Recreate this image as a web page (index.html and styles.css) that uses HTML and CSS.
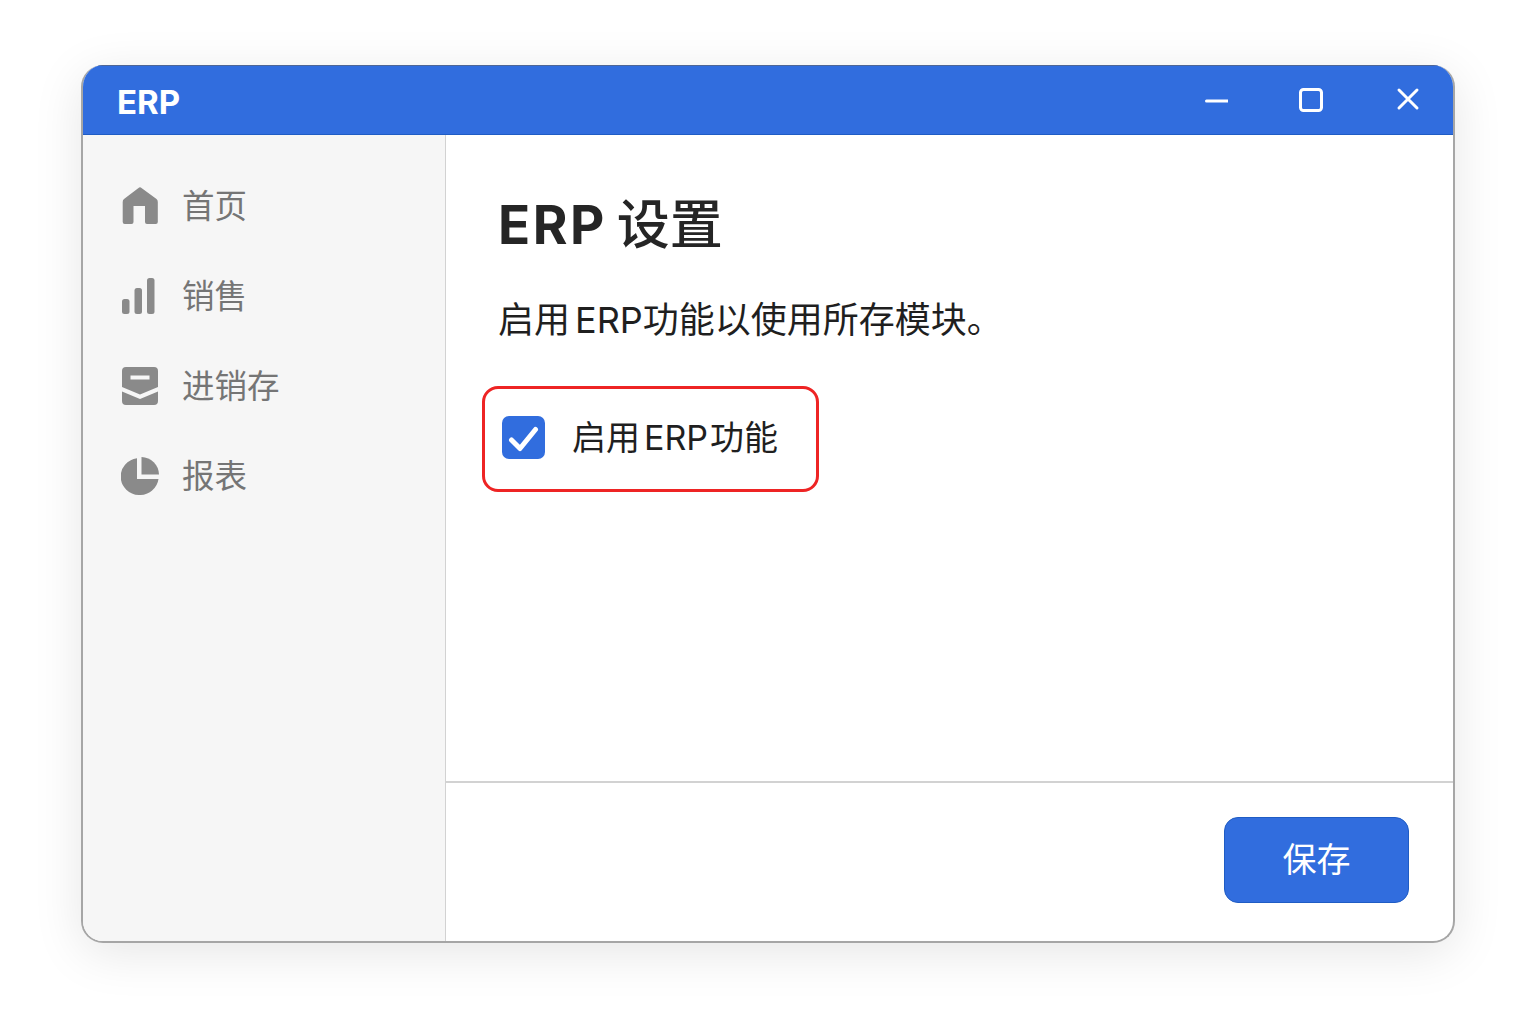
FILE: index.html
```html
<!DOCTYPE html>
<html lang="zh-CN">
<head>
    <meta charset="UTF-8">
    <title>ERP 设置</title>
    <link rel="stylesheet" href="styles.css">
</head>
<body>
    <div class="window">
        <header class="titlebar">
            <span class="app-name">ERP</span>
            <div class="window-controls">
                <svg class="win-icon" viewBox="0 0 28 28"><path d="M6.500 15h21" /></svg>
                <svg class="win-icon" viewBox="0 0 28 28"><rect x="3.500" y="3.500" width="21" height="21" rx="3" /></svg>
                <svg class="win-icon" viewBox="0 0 28 28"><path d="M5 4l18 18M23 4l-18 18" /></svg>
            </div>
        </header>
        <div class="window-body">
            <nav class="sidebar">
                <a class="nav-item">
                    <svg class="nav-icon" viewBox="0 0 38 38"><path d="M17.500 1Q19 -0.500 20.500 1L35.500 12Q36.800 13 36.800 15V35Q36.800 37 34.800 37H26Q24 37 24 35V19H12.500V35Q12.500 37 10.500 37H3.700Q1.700 37 1.700 35V15Q1.700 13 3 12Z" /></svg>
                    <span>首页</span>
                </a>
                <a class="nav-item">
                    <svg class="nav-icon" viewBox="0 0 38 38"><rect x="1" y="22" width="7.500" height="15" rx="2.500" /><rect x="13.500" y="11" width="7.500" height="26" rx="2.500" /><rect x="26" y="1" width="7.500" height="36" rx="2.500" /></svg>
                    <span>销售</span>
                </a>
                <a class="nav-item">
                    <svg class="nav-icon" viewBox="0 0 38 38"><path d="M5 0H33Q37 0 37 4V20L19 27.500L1 20V4Q1 0 5 0ZM9.500 8.500V12.500H28.500V8.500Z" fill-rule="evenodd" /><path d="M1 24.500L19 32L37 24.500V34Q37 38 33 38H5Q1 38 1 34Z" /></svg>
                    <span>进销存</span>
                </a>
                <a class="nav-item">
                    <svg class="nav-icon" viewBox="0 0 38 38"><path d="M16 1.200V22H37.500A19 18.500 0 1 1 16 1.200Z" /><path d="M20.500 0A18 18 0 0 1 38 17.500H20.500Z" /></svg>
                    <span>报表</span>
                </a>
            </nav>
            <main class="content">
                <section class="settings">
                    <h1><span class="latin-bold">ERP</span>设置</h1>
                    <p class="description">启用<span class="latin">ERP</span>功能以使用所存模块。</p>
                    <label class="checkbox-row">
                        <span class="checkbox">
                            <svg viewBox="0 0 43 43"><path d="M9.500 24L18 32.500L33.500 13.500" /></svg>
                        </span>
                        <span>启用<span class="latin">ERP</span>功能</span>
                    </label>
                </section>
                <footer class="actions">
                    <button class="btn-save">保存</button>
                </footer>
            </main>
        </div>
    </div>
</body>
</html>
```

FILE: styles.css
```css
* {
    margin: 0;
    padding: 0;
    box-sizing: border-box;
}

body {
    font-family: "Inter", "Noto Sans CJK SC", "Noto Sans", sans-serif;
    background: #fff;
    color: #1f1f1f;
    padding: 65px 81px 81px 81px;
    height: 1024px;
    overflow: hidden;
}

.window {
    width: 1374px;
    height: 878px;
    display: flex;
    flex-direction: column;
    background: #fff;
    border: 2px solid #a6a6a6;
    border-top: 0;
    border-radius: 22px;
    overflow: hidden;
    box-shadow: 0 10px 50px rgba(0, 0, 0, 0.1);
}

.titlebar {
    height: 70px;
    flex-shrink: 0;
    margin: 0 -2px;
    padding: 0 33px 0 36px;
    display: flex;
    align-items: center;
    justify-content: space-between;
    background: #316dde;
    border-top: 1px solid #4f6695;
    border-bottom: 1px solid #1f5cc4;
    color: #fff;
}

.app-name {
    padding-top: 4px;
    font-size: 33px;
    font-weight: 700;
    line-height: 1;
}

.window-controls {
    display: flex;
    align-items: center;
    gap: 69px;
}

.win-icon {
    width: 28px;
    height: 28px;
    fill: none;
    stroke: #fff;
    stroke-width: 3;
    stroke-linecap: round;
}

.window-body {
    flex: 1;
    display: flex;
    min-height: 0;
}

.sidebar {
    width: 363px;
    flex-shrink: 0;
    padding: 26px 0 0 38px;
    background: #f6f6f6;
    border-right: 1px solid #d2d2d2;
}

.nav-item {
    height: 90px;
    display: flex;
    align-items: center;
    gap: 23px;
    font-size: 32.500px;
    color: #757575;
}

.nav-item span {
    padding-bottom: 5px;
}

.nav-icon {
    width: 38px;
    height: 38px;
    flex-shrink: 0;
    fill: #8a8a8a;
}

.content {
    flex: 1;
    display: flex;
    flex-direction: column;
}

.settings {
    flex: 1;
    padding: 52px 0 0 52px;
}

h1 {
    font-size: 53px;
    font-weight: 500;
    line-height: 76px;
    color: #252525;
}

.latin-bold {
    margin-right: 10px;
    font-weight: 700;
    letter-spacing: 2.500px;
}

.latin {
    margin: 0 0 0 5px;
}

.description {
    margin-top: 31px;
    font-size: 36px;
    line-height: 52px;
    color: #1f1f1f;
}

.checkbox-row {
    width: 337px;
    height: 106px;
    margin: 40px 0 0 -16px;
    padding-left: 17px;
    display: flex;
    align-items: center;
    gap: 27px;
    font-size: 34px;
    border: 3px solid #ee2424;
    border-radius: 16px;
}

.checkbox-row > span:last-child {
    padding-bottom: 7px;
}

.checkbox-row .latin {
    margin: 0 2px 0 4px;
}

.checkbox {
    width: 43px;
    height: 43px;
    flex-shrink: 0;
    margin-top: -3px;
    background: #316dde;
    border-radius: 7px;
}

.checkbox svg {
    display: block;
    fill: none;
    stroke: #fff;
    stroke-width: 5;
    stroke-linecap: round;
    stroke-linejoin: round;
}

.actions {
    height: 160px;
    flex-shrink: 0;
    padding: 34px 44px 0 0;
    display: flex;
    justify-content: flex-end;
    align-items: flex-start;
    border-top: 2px solid #d2d2d2;
}

.btn-save {
    width: 185px;
    height: 86px;
    padding-bottom: 5px;
    font-family: inherit;
    font-size: 34px;
    color: #fff;
    background: #316dde;
    border: 1px solid #1f5cc4;
    border-radius: 14px;
}
```
